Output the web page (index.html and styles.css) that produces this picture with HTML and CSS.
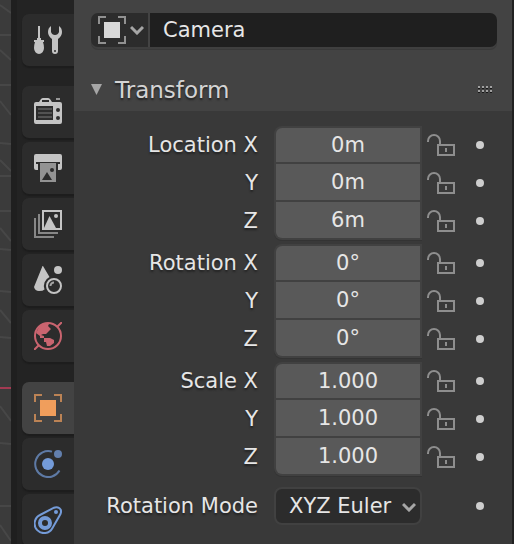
FILE: index.html
```html
<!DOCTYPE html>
<html lang="en">
<head>
<meta charset="utf-8">
<title>Object Properties</title>
<link rel="stylesheet" href="styles.css">
</head>
<body>
<div class="app">
  <div class="viewport">
    <svg class="viewport-grid" viewBox="0 0 11 544" preserveAspectRatio="none" aria-hidden="true">
      <path d="M0 5L11 13M0 35H11M0 50L11 60M0 85H11M0 101L11 115M0 143L11 144M0 160L11 171M0 176H11M0 211H11M0 228L11 241M0 249L11 250M0 291L11 292M0 310L11 323M0 337L11 338M0 406L11 421M0 443L11 444M0 506H11M0 525L11 541" fill="none" stroke="#474747" stroke-width="2"/>
      <path d="M0 388H11" stroke="#a33a52" stroke-width="2"/>
    </svg>
  </div>
  <nav class="tabs" aria-label="Properties">
    <button class="tab" aria-label="Tool">
      <svg class="icon" viewBox="0 0 28 28"><path d="M4 0h2v12h1v2h3v2H9q1 3 1 6a5 6 0 0 1-10 0q0-3 1-6H0v-2h3v-2h1z"/><path d="M17 0Q14 2 14 6t4 7v12a3 3 0 0 0 6 0V13q4-3 4-7t-3-6v6q-1 3-4 3t-4-3z"/><circle class="cut" cx="21" cy="25" r="1"/></svg>
    </button>
    <button class="tab group-start" aria-label="Render">
      <svg class="icon" viewBox="0 0 28 28"><path d="M2 4h3l2-3q1-1 2-1h5q1 0 2 1l2 3h8q2 0 2 2v18q0 2-2 2H2q-2 0-2-2V6q0-2 2-2z"/><path d="M22 0h4v2h-4z" opacity=".7"/><path class="cut" d="M8 2h7v2H8zM2 8h17v14H2z"/><path d="M4 10h14v2H4zM4 14h14v2H4zM4 18h14v2H4z" opacity=".25"/><circle class="cut" cx="24" cy="12" r="2"/><circle class="cut" cx="24" cy="20" r="2"/></svg>
    </button>
    <button class="tab" aria-label="Output">
      <svg class="icon" viewBox="0 0 28 28"><path d="M2 0h24q2 0 2 2v12q0 2-2 2h-2V9H4v7H2q-2 0-2-2V2q0-2 2-2z"/><path class="cut" d="M2 8h24v2H2z"/><path d="M6 9h16v19H6z" opacity=".68"/><path class="cut" d="M8 26l5-8 5 8z"/><circle class="cut" cx="18" cy="16" r="2"/></svg>
    </button>
    <button class="tab" aria-label="View Layer">
      <svg class="icon" viewBox="0 0 28 28"><path class="line" d="M5 4v19h19M1 8v19h19" opacity=".6"/><rect class="line" x="9" y="1" width="18" height="18"/><path d="M10 18l5.500-12L22 18z"/><circle cx="22" cy="6" r="2"/></svg>
    </button>
    <button class="tab" aria-label="Scene">
      <svg class="icon" viewBox="0 0 28 28"><path d="M9 0l6.500 11A10 10 0 0 0 10.500 23.500Q9 25 5 25T0 21L8.500 0z"/><circle cx="24" cy="4" r="4"/><circle class="line" cx="20" cy="20" r="7"/><path class="line" d="M16.500 20a3.500 3.500 0 0 1 3.500-3.500" opacity=".8"/></svg>
    </button>
    <button class="tab world" aria-label="World">
      <svg class="icon" viewBox="0 0 28 28"><circle class="line" cx="14" cy="14" r="13"/><path class="line" d="M23.500 4.500L28 0M4.500 23.500L0 28"/><path d="M2 11l3-6 5-4 5 1-1 2 3 3-2 2-3 3H9l-2 1 3 1v2H6v-2z"/><path d="M10 16h6l4 2v3l-4 3h-3l-1-4h-2z"/></svg>
    </button>
    <button class="tab group-start object active" aria-label="Object" aria-current="page">
      <svg class="icon" viewBox="0 0 28 28"><path d="M6 6h16v16H6z"/><path class="line" d="M8 1H1v7M20 1h7v7M8 27H1v-7M20 27h7v-7" opacity=".7"/></svg>
    </button>
    <button class="tab blue" aria-label="Physics">
      <svg class="icon" viewBox="0 0 28 28"><circle cx="14" cy="14" r="6"/><circle cx="24" cy="4" r="4" opacity=".75"/><path class="line" d="M18 1.600A13 13 0 1 0 25.500 20.500" opacity=".7"/></svg>
    </button>
    <button class="tab blue" aria-label="Object Constraints">
      <svg class="icon" viewBox="0 0 28 28"><path class="line" d="M6 9L20 1.700Q23 .5 25.500 2.300T26.500 8L18.500 22A9.500 9.500 0 1 1 6 9z"/><circle class="ring" cx="11" cy="17" r="5"/><circle cx="22" cy="6" r="2"/></svg>
    </button>
  </nav>
  <main class="panel">
    <header class="panel-top">
      <div class="datablock">
        <button class="browse" aria-label="Browse object">
          <svg class="icon" viewBox="0 0 28 28"><path class="bright" d="M6 6h16v16H6z"/><path class="line" d="M8 1H1v7M20 1h7v7M8 27H1v-7M20 27h7v-7" opacity=".7"/></svg>
          <svg class="chevron" viewBox="0 0 14 10"><path d="M1 2l6 6 6-6"/></svg>
        </button>
        <input class="name" type="text" value="Camera" aria-label="Name">
      </div>
      <div class="section-head">
        <h2><button class="disclose" aria-expanded="true"><svg class="triangle" viewBox="0 0 12 12" aria-hidden="true"><path d="M0 0h11L5.500 11z"/></svg>Transform</button></h2>
        <svg class="grip" viewBox="0 0 14 8" aria-hidden="true"><path d="M0 0h2v2H0zM4 0h2v2H4zM8 0h2v2H8zM12 0h2v2h-2zM0 4h2v2H0zM4 4h2v2H4zM8 4h2v2H8zM12 4h2v2h-2z" fill="#a0a0a0"/><path d="M0 2h2v1H0zM4 2h2v1H4zM8 2h2v1H8zM12 2h2v1h-2zM0 6h2v1H0zM4 6h2v1H4zM8 6h2v1H8zM12 6h2v1h-2z" fill="#161616"/></svg>
      </div>
    </header>
    <form class="props">
      <div class="group">
        <div class="row"><label for="lx">Location X</label><span class="cell"><input id="lx" type="text" value="0m"></span><button type="button" class="lock" aria-label="Lock location X"><svg viewBox="0 0 28 22"><use href="#lock"/></svg></button><button type="button" class="key" aria-label="Animate location X"></button></div>
        <div class="row"><label for="ly">Y</label><span class="cell"><input id="ly" type="text" value="0m"></span><button type="button" class="lock" aria-label="Lock location Y"><svg viewBox="0 0 28 22"><use href="#lock"/></svg></button><button type="button" class="key" aria-label="Animate location Y"></button></div>
        <div class="row"><label for="lz">Z</label><span class="cell"><input id="lz" type="text" value="6m"></span><button type="button" class="lock" aria-label="Lock location Z"><svg viewBox="0 0 28 22"><use href="#lock"/></svg></button><button type="button" class="key" aria-label="Animate location Z"></button></div>
      </div>
      <div class="group">
        <div class="row"><label for="rx">Rotation X</label><span class="cell"><input id="rx" type="text" value="0°"></span><button type="button" class="lock" aria-label="Lock rotation X"><svg viewBox="0 0 28 22"><use href="#lock"/></svg></button><button type="button" class="key" aria-label="Animate rotation X"></button></div>
        <div class="row"><label for="ry">Y</label><span class="cell"><input id="ry" type="text" value="0°"></span><button type="button" class="lock" aria-label="Lock rotation Y"><svg viewBox="0 0 28 22"><use href="#lock"/></svg></button><button type="button" class="key" aria-label="Animate rotation Y"></button></div>
        <div class="row"><label for="rz">Z</label><span class="cell"><input id="rz" type="text" value="0°"></span><button type="button" class="lock" aria-label="Lock rotation Z"><svg viewBox="0 0 28 22"><use href="#lock"/></svg></button><button type="button" class="key" aria-label="Animate rotation Z"></button></div>
      </div>
      <div class="group">
        <div class="row"><label for="sx">Scale X</label><span class="cell"><input id="sx" type="text" value="1.000"></span><button type="button" class="lock" aria-label="Lock scale X"><svg viewBox="0 0 28 22"><use href="#lock"/></svg></button><button type="button" class="key" aria-label="Animate scale X"></button></div>
        <div class="row"><label for="sy">Y</label><span class="cell"><input id="sy" type="text" value="1.000"></span><button type="button" class="lock" aria-label="Lock scale Y"><svg viewBox="0 0 28 22"><use href="#lock"/></svg></button><button type="button" class="key" aria-label="Animate scale Y"></button></div>
        <div class="row"><label for="sz">Z</label><span class="cell"><input id="sz" type="text" value="1.000"></span><button type="button" class="lock" aria-label="Lock scale Z"><svg viewBox="0 0 28 22"><use href="#lock"/></svg></button><button type="button" class="key" aria-label="Animate scale Z"></button></div>
      </div>
      <div class="row mode"><label for="mode">Rotation Mode</label><span class="select"><select id="mode"><option>XYZ Euler</option></select><svg class="chevron" viewBox="0 0 14 10" aria-hidden="true"><path d="M1 2l6 6 6-6"/></svg></span><span></span><button type="button" class="key" aria-label="Animate rotation mode"></button></div>
    </form>
  </main>
</div>
<svg class="defs" aria-hidden="true"><defs><g id="lock"><path d="M1 8V7a6 6 0 0 1 12 0v4M11 11h16v10H11z" fill="none" stroke="#8e8e8e" stroke-width="2"/><path d="M18 14h2v4h-2z" fill="#8e8e8e"/></g></defs></svg>
</body>
</html>
```
FILE: styles.css
```css
* { box-sizing: border-box; }

body {
  margin: 0;
  background: #393939;
  color: #e6e6e6;
  font: 21px/26px "DejaVu Sans", sans-serif;
}

button, input, select {
  margin: 0;
  padding: 0;
  border: 0;
  background: none;
  color: inherit;
  font: inherit;
}

.defs { position: absolute; width: 0; height: 0; }

.app {
  display: flex;
  height: 100vh;
  overflow: hidden;
}

.viewport { flex: 0 0 11px; background: #3b3b3b; }
.viewport-grid { display: block; width: 100%; height: 100%; }

.tabs {
  flex: 0 0 63px;
  display: flex;
  flex-direction: column;
  gap: 4px;
  padding: 14px 0 0 5px;
  border-left: 6px solid #1f1f1f;
  background: #232323;
  overflow: hidden;
}

.tab {
  flex: none;
  display: flex;
  align-items: center;
  justify-content: center;
  height: 52px;
  border-radius: 7px 0 0 7px;
  background: #2c2c2c;
  box-shadow: 0 2px 1px #1d1d1d;
  color: #c4c4c4;
}
.tab.group-start { margin-top: 16px; }
.tab.active { background: #434343; }
.tab.world { color: #c9646f; }
.tab.object { color: #f09e5c; }
.tab.blue { color: #749bd8; }

.icon { display: block; flex: none; width: 28px; height: 28px; fill: currentColor; }
.icon .line { fill: none; stroke: currentColor; stroke-width: 2; }
.icon .ring { fill: none; stroke: currentColor; stroke-width: 4; }
.icon .cut { fill: #2c2c2c; }
.icon .bright { fill: #d8d8d8; }

.chevron {
  flex: none;
  width: 14px;
  height: 10px;
  fill: none;
  stroke: #a6a6a6;
  stroke-width: 3;
}

.panel {
  flex: 1;
  min-width: 0;
  border-right: 2px solid #212121;
  background: #393939;
}

.panel-top {
  padding: 13px 15px 7px 17px;
  background: #434343;
}

.datablock {
  display: flex;
  gap: 2px;
  height: 34px;
  border-radius: 7px;
  box-shadow: 0 2px 0 #3f3f3f, 0 3px 0 #393939;
}
.browse {
  display: flex;
  align-items: center;
  gap: 4px;
  padding: 0 4px 0 7px;
  border-radius: 7px 0 0 7px;
  background: #2c2c2c;
  color: #bcbcbc;
}
.name {
  flex: 1;
  min-width: 0;
  padding: 0 13px;
  border-radius: 0 7px 7px 0;
  background: #1f1f1f;
}

.section-head {
  display: flex;
  align-items: center;
  justify-content: space-between;
  margin-top: 29px;
  padding-right: 5px;
}
.section-head h2 { margin: 0; font: inherit; font-size: 23px; line-height: 28px; }
.disclose {
  display: flex;
  align-items: center;
  gap: 12px;
  color: #d4d4d4;
  text-shadow: 0 2px 2px #222;
}
.triangle { width: 12px; height: 12px; fill: #a6a6a6; }
.grip { width: 14px; height: 8px; }

.props {
  display: flex;
  flex-direction: column;
  gap: 4px;
  padding: 15px 15px 0 17px;
}

.row {
  display: grid;
  grid-template-columns: 167fr 16px 148fr 5px 28px 19px 12px 11px;
  align-items: center;
  height: 38px;
}
.row > :nth-child(1) { grid-column: 1; }
.row > :nth-child(2) { grid-column: 3; }
.row > :nth-child(3) { grid-column: 5; }
.row > :nth-child(4) { grid-column: 7; }

.row label {
  text-align: right;
  white-space: nowrap;
  text-shadow: 0 2px 2px #222;
}

.cell {
  display: block;
  height: 38px;
  padding: 0 2px 2px;
  background: #414141;
}
.cell input {
  display: block;
  width: 100%;
  height: 100%;
  background: #595959;
  text-align: center;
}
.row:first-child .cell { padding-top: 2px; border-top-left-radius: 8px; }
.row:first-child input { border-top-left-radius: 6px; }
.row:last-child .cell { border-bottom-left-radius: 8px; }
.row:last-child input { border-bottom-left-radius: 6px; }
.group .row:last-child .cell { box-shadow: 0 1px 0 #333; }

.lock svg { display: block; width: 28px; height: 22px; }

.key {
  justify-self: center;
  width: 8px;
  height: 8px;
  border-radius: 50%;
  background: #cecece;
}

.mode { margin-top: 7px; }
.select {
  position: relative;
  display: block;
  height: 38px;
  border: 2px solid #414141;
  border-radius: 8px;
  background: #2c2c2c;
}
.select select {
  display: block;
  width: 100%;
  height: 100%;
  padding: 0 24px 0 13px;
  appearance: none;
}
.select .chevron {
  position: absolute;
  right: 4px;
  top: 13px;
  pointer-events: none;
}
```
